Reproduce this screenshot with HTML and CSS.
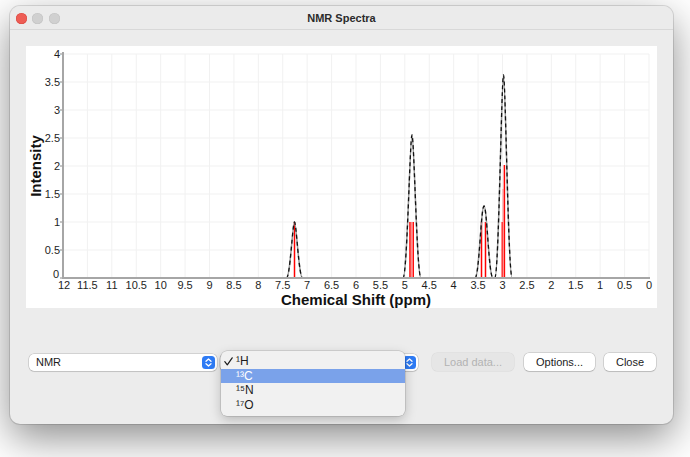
FILE: index.html
```html
<!DOCTYPE html>
<html lang="en">
<head>
<meta charset="utf-8">
<title>NMR Spectra</title>
<link rel="stylesheet" href="styles.css">
</head>
<body>
<div class="window">
  <div class="titlebar">
    <div class="lights">
      <span class="light red"></span>
      <span class="light gray"></span>
      <span class="light gray"></span>
    </div>
    <div class="title">NMR Spectra</div>
    <div></div>
  </div>
  <div class="content">
    <div class="plot">
      <svg width="631" height="262" viewBox="26 46 631 262" xmlns="http://www.w3.org/2000/svg">
        <rect x="26" y="46" width="631" height="262" fill="#ffffff"/>
        <g class="grid" stroke="#f1f1f1" stroke-width="1" fill="none">
          <path d="M63 54H649M63 82H649M63 110H649M63 138H649M63 166H649M63 194H649M63 222H649M63 250H649"/>
          <path d="M87.42 54V278M111.83 54V278M136.25 54V278M160.67 54V278M185.08 54V278M209.5 54V278M233.92 54V278M258.33 54V278M282.75 54V278M307.17 54V278M331.58 54V278M356 54V278M380.42 54V278M404.83 54V278M429.25 54V278M453.67 54V278M478.08 54V278M502.5 54V278M526.92 54V278M551.33 54V278M575.75 54V278M600.17 54V278M624.58 54V278M649 54V278"/>
        </g>
        <g class="ticks" stroke="#8a8a8a" stroke-width="1">
          <path d="M60 54H63M60 82H63M60 110H63M60 138H63M60 166H63M60 194H63M60 222H63M60 250H63M60 278H63"/>
        </g>
        <g class="sticks" stroke="#ff0000" stroke-width="1.5">
          <path d="M294.5 278V222"/>
          <path d="M410 278V222M413.2 278V222"/>
          <path d="M411.6 278V222" stroke="#ff8c8c"/>
          <path d="M481.5 278V222M485.5 278V222"/>
          <path d="M502.3 278V222M504.4 278V165"/>
          <path d="M503.3 278V189" stroke="#ff8c8c"/>
        </g>
        <g class="curve" fill="none">
          <path class="curve-under" stroke="#9b9b9b" stroke-width="1.5" d="M286.4 278C290.18 278 292.61 222 294.5 222C296.39 222 298.82 278 302.6 278M403 278C407.2 278 409.9 135 412 135C414.1 135 416.8 278 421 278M475 278C479.2 278 481 206 484 206C487 206 488.8 278 493 278M494.8 278C498.86 278 501.47 75 503.5 75C505.53 75 508.14 278 512.2 278"/>
          <path class="curve-dash" stroke="#111111" stroke-width="1.3" stroke-dasharray="4 3" d="M286.4 278C290.18 278 292.61 222 294.5 222C296.39 222 298.82 278 302.6 278M403 278C407.2 278 409.9 135 412 135C414.1 135 416.8 278 421 278M475 278C479.2 278 481 206 484 206C487 206 488.8 278 493 278M494.8 278C498.86 278 501.47 75 503.5 75C505.53 75 508.14 278 512.2 278"/>
        </g>
        <g class="axes" stroke="#a6a6a6" stroke-width="2" fill="none">
          <path d="M63 52V279M62 278H650"/>
        </g>
        <g class="ylabels" font-size="11" fill="#1e1e1e" text-anchor="end" dominant-baseline="central">
          <text x="60" y="54">4</text>
          <text x="60" y="82">3.5</text>
          <text x="60" y="110">3</text>
          <text x="60" y="138">2.5</text>
          <text x="60" y="166">2</text>
          <text x="60" y="194">1.5</text>
          <text x="60" y="222">1</text>
          <text x="60" y="250">0.5</text>
          <text x="59" y="274">0</text>
        </g>
        <g class="xlabels" font-size="11" fill="#1e1e1e" text-anchor="middle" dominant-baseline="central">
          <text x="64" y="285">12</text>
          <text x="87.42" y="285">11.5</text>
          <text x="111.83" y="285">11</text>
          <text x="136.25" y="285">10.5</text>
          <text x="160.67" y="285">10</text>
          <text x="185.08" y="285">9.5</text>
          <text x="209.5" y="285">9</text>
          <text x="233.92" y="285">8.5</text>
          <text x="258.33" y="285">8</text>
          <text x="282.75" y="285">7.5</text>
          <text x="307.17" y="285">7</text>
          <text x="331.58" y="285">6.5</text>
          <text x="356" y="285">6</text>
          <text x="380.42" y="285">5.5</text>
          <text x="404.83" y="285">5</text>
          <text x="429.25" y="285">4.5</text>
          <text x="453.67" y="285">4</text>
          <text x="478.08" y="285">3.5</text>
          <text x="502.5" y="285">3</text>
          <text x="526.92" y="285">2.5</text>
          <text x="551.33" y="285">2</text>
          <text x="575.75" y="285">1.5</text>
          <text x="600.17" y="285">1</text>
          <text x="624.58" y="285">0.5</text>
          <text x="649" y="285">0</text>
        </g>
        <text class="axis-title" x="356" y="299" text-anchor="middle" dominant-baseline="central">Chemical Shift (ppm)</text>
        <text class="axis-title" x="35" y="166" text-anchor="middle" dominant-baseline="central" transform="rotate(-90 35 166)">Intensity</text>
      </svg>
    </div>
    <div class="controls">
      <div class="combo combo-type">
        <span class="combo-text">NMR</span>
        <span class="stepper"><svg width="13" height="13" viewBox="0 0 13 13"><path d="M4 5.2L6.5 2.9L9 5.2M4 7.8L6.5 10.1L9 7.8" fill="none" stroke="#fff" stroke-width="1.3" stroke-linecap="round" stroke-linejoin="round"/></svg></span>
      </div>
      <div class="combo combo-nucleus">
        <span class="combo-text"></span>
        <span class="stepper"><svg width="13" height="13" viewBox="0 0 13 13"><path d="M4 5.2L6.5 2.9L9 5.2M4 7.8L6.5 10.1L9 7.8" fill="none" stroke="#fff" stroke-width="1.3" stroke-linecap="round" stroke-linejoin="round"/></svg></span>
        <div class="popup">
          <div class="item checked"><svg class="check" width="9" height="9" viewBox="0 0 9 9"><path d="M0.8 4.6L3.3 7.8L8.2 0.8" fill="none" stroke="#1c1c1c" stroke-width="1.2" stroke-linecap="round" stroke-linejoin="round"/></svg><span>¹H</span></div>
          <div class="item selected"><span>¹³C</span></div>
          <div class="item"><span>¹⁵N</span></div>
          <div class="item"><span>¹⁷O</span></div>
        </div>
      </div>
      <button class="btn btn-load" disabled>Load data...</button>
      <button class="btn btn-options">Options...</button>
      <button class="btn btn-close">Close</button>
    </div>
  </div>
</div>
</body>
</html>
```

FILE: styles.css
```css
* {
  box-sizing: border-box;
}

html, body {
  margin: 0;
  padding: 0;
  background: #ffffff;
  font-family: "Liberation Sans", Arial, sans-serif;
}

body {
  min-height: 457px;
  padding-top: 6px;
  padding-left: 10px;
}

.window {
  width: 663px;
  height: 418px;
  background: #ececec;
  border-radius: 10px;
  box-shadow: 0 0 0 1px rgba(0, 0, 0, 0.12), 0 14px 40px rgba(0, 0, 0, 0.45);
}

.titlebar {
  height: 24px;
  display: grid;
  grid-template-columns: 1fr auto 1fr;
  align-items: center;
  border-bottom: 1px solid #d8d8d8;
  border-radius: 10px 10px 0 0;
  background: #ebebeb;
}

.lights {
  display: flex;
  gap: 5.5px;
  padding-left: 5.5px;
  padding-top: 1px;
}

.light {
  width: 11px;
  height: 11px;
  border-radius: 50%;
}

.light.red {
  background: #ee5d55;
  box-shadow: inset 0 0 0 0.5px #d9463e;
}

.light.gray {
  background: #d0d0d0;
  box-shadow: inset 0 0 0 0.5px #c2c2c2;
}

.title {
  font-size: 11px;
  font-weight: bold;
  color: #2b2b2b;
  padding-top: 1px;
}

.content {
  padding: 16px 16px 0 16px;
}

.plot {
  width: 631px;
  height: 262px;
  background: #ffffff;
}

.plot svg {
  display: block;
  font-family: "Liberation Sans", Arial, sans-serif;
}

.axis-title {
  font-size: 15px;
  font-weight: bold;
  fill: #111111;
}

.controls {
  margin-top: 45px;
  height: 18px;
  display: flex;
  align-items: center;
  padding-left: 3px;
}

.combo {
  position: relative;
  height: 17px;
  background: #ffffff;
  border-radius: 5px;
  box-shadow: 0 0 0 0.5px rgba(0, 0, 0, 0.22), 0 1px 1px rgba(0, 0, 0, 0.08);
  display: flex;
  align-items: center;
  justify-content: space-between;
  padding: 0 2px 0 7px;
  font-size: 11px;
  color: #1c1c1c;
}

.combo-type {
  width: 188px;
}

.combo-nucleus {
  width: 198px;
  margin-left: 3px;
}

.stepper {
  width: 13px;
  height: 13px;
  border-radius: 3.5px;
  background: #2e7bf5;
  display: flex;
}

.popup {
  position: absolute;
  left: 1px;
  top: -3px;
  width: 184px;
  height: 65px;
  padding: 3.5px 0;
  background: #f1f1f1;
  border-radius: 6px;
  box-shadow: 0 0 0 0.5px rgba(0, 0, 0, 0.2), 0 4px 12px rgba(0, 0, 0, 0.22);
  z-index: 2;
}

.item {
  height: 14.5px;
  display: flex;
  align-items: center;
  padding-left: 15px;
  font-size: 12px;
  color: #1c1c1c;
}

.item.checked {
  padding-left: 3px;
}

.item .check {
  margin-right: 3px;
}

.item.selected {
  background: #7aa2ea;
  color: #ffffff;
}

.btn {
  height: 18px;
  padding: 0;
  border: none;
  border-radius: 5px;
  background: #ffffff;
  box-shadow: 0 0 0 0.5px rgba(0, 0, 0, 0.22), 0 1px 1px rgba(0, 0, 0, 0.1);
  font-family: "Liberation Sans", Arial, sans-serif;
  font-size: 11px;
  color: #1c1c1c;
}

.btn-load {
  width: 82px;
  margin-left: 14px;
  background: #e6e6e6;
  color: #b3b3b3;
  box-shadow: 0 0 0 0.5px rgba(0, 0, 0, 0.08);
}

.btn-options {
  width: 71px;
  margin-left: 10px;
}

.btn-close {
  width: 52px;
  margin-left: 9px;
}
```
